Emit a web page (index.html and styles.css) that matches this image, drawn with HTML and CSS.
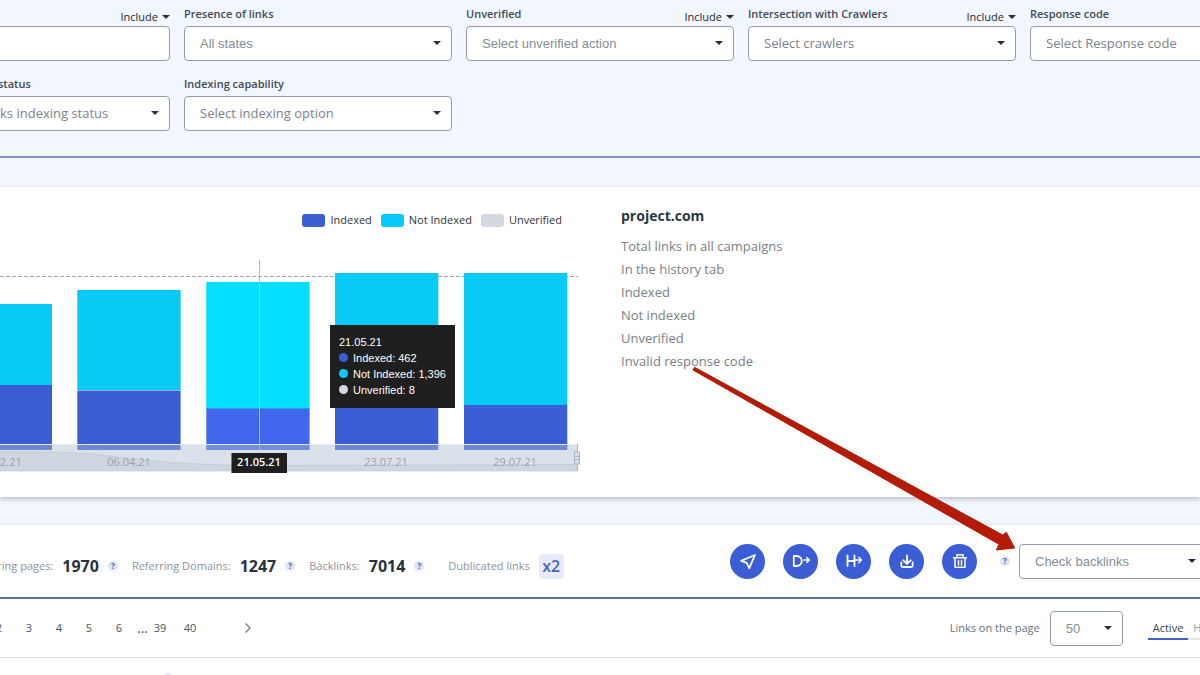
FILE: index.html
```html
<!DOCTYPE html>
<html lang="en">
<head>
<meta charset="utf-8">
<title>Backlinks</title>
<link rel="stylesheet" href="styles.css">
</head>
<body>
<main class="page">
  <form class="filters">
    <div class="field">
      <div class="field-head"><label class="field-label" for="f-search"></label><button type="button" class="include">Include<span class="caret"></span></button></div>
      <input class="control" id="f-search" type="text" aria-label="Search">
    </div>
    <div class="field">
      <div class="field-head"><label class="field-label" for="f-presence">Presence of links</label></div>
      <div class="select"><select class="control arial" id="f-presence"><option>All states</option></select><span class="caret"></span></div>
    </div>
    <div class="field">
      <div class="field-head"><label class="field-label" for="f-unverified">Unverified</label><button type="button" class="include">Include<span class="caret"></span></button></div>
      <div class="select"><select class="control arial" id="f-unverified"><option>Select unverified action</option></select><span class="caret"></span></div>
    </div>
    <div class="field">
      <div class="field-head"><label class="field-label" for="f-crawlers">Intersection with Crawlers</label><button type="button" class="include">Include<span class="caret"></span></button></div>
      <div class="select"><select class="control" id="f-crawlers"><option>Select crawlers</option></select><span class="caret"></span></div>
    </div>
    <div class="field">
      <div class="field-head"><label class="field-label" for="f-code">Response code</label></div>
      <div class="select"><select class="control" id="f-code"><option>Select Response code</option></select><span class="caret"></span></div>
    </div>
    <div class="field">
      <div class="field-head"><label class="field-label" for="f-status">Backlink indexing status</label></div>
      <div class="select"><select class="control" id="f-status"><option>Select backlinks indexing status</option></select><span class="caret"></span></div>
    </div>
    <div class="field">
      <div class="field-head"><label class="field-label" for="f-capability">Indexing capability</label></div>
      <div class="select"><select class="control" id="f-capability"><option>Select indexing option</option></select><span class="caret"></span></div>
    </div>
  </form>

  <section class="card overview">
    <div class="chart">
      <ul class="legend">
        <li><span class="swatch indexed"></span>Indexed</li>
        <li><span class="swatch not-indexed"></span>Not Indexed</li>
        <li><span class="swatch unverified"></span>Unverified</li>
      </ul>
      <svg class="plot" width="600" height="220" viewBox="0 256 600 220">
        <path d="M0 276.500H578" stroke="#a5a5a5" stroke-dasharray="4 2" fill="none"/>
        <g fill="#07caf6">
          <rect x="-51" y="304" width="103" height="81"/>
          <rect x="77.300" y="290" width="103.300" height="100"/>
          <rect x="206.300" y="282" width="103.300" height="127" fill="#05dfff"/>
          <rect x="335" y="273" width="103.300" height="130"/>
          <rect x="464" y="273" width="103.300" height="132"/>
        </g>
        <g fill="#3b5dd6">
          <rect x="-51" y="385" width="103" height="65"/>
          <rect x="77.300" y="390.500" width="103.300" height="59.500"/>
          <rect x="206.300" y="408.500" width="103.300" height="41.500" fill="#4167ec"/>
          <rect x="335" y="403" width="103.300" height="47"/>
          <rect x="464" y="405" width="103.300" height="45"/>
        </g>
        <rect x="0" y="444" width="577" height="27" fill="#afbcd0" fill-opacity=".45"/>
        <path d="M0 451.500C60 452 80 452 110 456S190 465 250 465.500L577 464.500V471H0Z" fill="#bcc9d2" fill-opacity=".4" stroke="#b9c6d4" stroke-width=".6"/>
        <path d="M0 444.500H577" stroke="#e6ebf3"/>
        <path d="M577.500 444V471" stroke="#a7b7cc"/>
        <path d="M259.500 260V450" stroke="#b4bcc6"/>
        <rect x="574.500" y="452" width="5" height="12" fill="#d9e2ec" stroke="#a7b7cc"/>
        <path d="M575 456.500h4M575 459.500h4" stroke="#a7b7cc"/>
        <g class="axis">
          <text x="0" y="466">11.02.21</text>
          <text x="129" y="466">06.04.21</text>
          <text x="386" y="466">23.07.21</text>
          <text x="515" y="466">29.07.21</text>
        </g>
        <rect x="231.500" y="453" width="55.500" height="20" fill="#1f1f1f"/>
        <text class="axis-active" x="259" y="466">21.05.21</text>
      </svg>
      <div class="tooltip">
        <div>21.05.21</div>
        <div><span class="dot indexed"></span>Indexed: 462</div>
        <div><span class="dot not-indexed"></span>Not Indexed: 1,396</div>
        <div><span class="dot unverified"></span>Unverified: 8</div>
      </div>
    </div>
    <div class="summary">
      <h2>project.com</h2>
      <ul>
        <li>Total links in all campaigns</li>
        <li>In the history tab</li>
        <li>Indexed</li>
        <li>Not indexed</li>
        <li>Unverified</li>
        <li>Invalid response code</li>
      </ul>
    </div>
  </section>

  <section class="card results">
    <div class="toolbar">
      <div class="stats">
        <div class="stat"><span class="stat-label">Referring pages:</span><strong>1970</strong><span class="help">?</span></div>
        <div class="stat"><span class="stat-label">Referring Domains:</span><strong>1247</strong><span class="help">?</span></div>
        <div class="stat"><span class="stat-label">Backlinks:</span><strong>7014</strong><span class="help">?</span></div>
        <div class="stat duplicates"><span class="stat-label">Dublicated links</span><button type="button" class="multiplier">x2</button></div>
      </div>
      <div class="actions">
        <button type="button" class="round" aria-label="Send"><svg width="34" height="34" viewBox="0 0 34 34"><path d="M24 11L10.200 16.800L15.700 18.800L18.200 24.200Z"/></svg></button>
        <button type="button" class="round" aria-label="Export domains"><svg width="34" height="34" viewBox="0 0 34 34"><path d="M9.800 12V22H12.500C19.500 22 19.500 12 12.500 12Z"/><path class="thin" d="M20 16h5.200M22.800 13.500L25.300 16L22.800 18.500"/></svg></button>
        <button type="button" class="round" aria-label="Export hosts"><svg width="34" height="34" viewBox="0 0 34 34"><path d="M10.500 11.500V22M17.500 11.500V22M10.500 17H17.500"/><path class="thin" d="M17.500 16h6.700M21.800 13.300L24.500 16L21.800 18.700"/></svg></button>
        <button type="button" class="round" aria-label="Download"><svg width="34" height="34" viewBox="0 0 34 34"><path d="M17 11.500V19.500M13.300 16.300L17 19.800L20.700 16.300M11.300 18.500V21.500Q11.300 23 12.800 23H21.200Q22.700 23 22.700 21.500V18.500"/></svg></button>
        <button type="button" class="round" aria-label="Delete"><svg width="34" height="34" viewBox="0 0 34 34"><path class="thin" d="M10.500 13.700H23.500M14 13.500V10.800H20V13.500M12 14V23.300H22V14M15.500 16.500V21M18.500 16.500V21"/></svg></button>
        <span class="help">?</span>
        <div class="select bulk"><select class="control arial" aria-label="Bulk action"><option>Check backlinks</option></select><span class="caret"></span></div>
      </div>
    </div>
    <div class="pager-bar">
      <nav class="pager" aria-label="Pages">
        <a href="#">2</a><a href="#">3</a><a href="#">4</a><a href="#">5</a><a href="#">6</a><span class="ellipsis">...</span><a href="#">39</a><a href="#">40</a>
        <a href="#" class="next" aria-label="Next page"><svg width="8" height="12" viewBox="0 0 8 12"><path d="M1.500 1.500L6 6L1.500 10.500"/></svg></a>
      </nav>
      <div class="view">
        <label for="per-page">Links on the page</label>
        <div class="select per-page"><select class="control arial" id="per-page"><option>50</option></select><span class="caret"></span></div>
        <div class="tabs"><a href="#" class="tab active">Active</a><a href="#" class="tab">History</a></div>
      </div>
    </div>
    <div class="table-head"><span class="help">?</span></div>
  </section>

  <svg class="pointer" width="324" height="184" viewBox="692 367 324 184" aria-hidden="true"><path d="M694.500 367.300L1002.700 535L1006.300 532.300L1014.700 548L996.300 550L999 544.300L693 370Z" fill="#b31b06" stroke="#b31b06" stroke-linejoin="round"/></svg>
</main>
</body>
</html>
```
FILE: styles.css
```css
* { box-sizing: border-box; }
body {
  margin: 0;
  background: #f2f6fe;
  color: #39424c;
  font: 11px/16px "Open Sans", "Noto Sans", sans-serif;
}
ul { list-style: none; margin: 0; padding: 0; }
a { color: inherit; text-decoration: none; }
button { font: inherit; border: 0; background: none; padding: 0; color: inherit; cursor: pointer; }

.page { position: relative; height: 100vh; overflow: hidden; }

/* Filters */
.filters {
  display: grid;
  grid-template-columns: repeat(5, 1fr);
  gap: 9px 14px;
  margin: 0 -98px;
  padding-bottom: 25px;
  border-bottom: 2px solid #8796c4;
}
.field-head {
  display: flex;
  justify-content: space-between;
  height: 26px;
  padding: 6px 0 1px;
}
.field-label { font-weight: 600; white-space: nowrap; color: #414a55; }
.include { align-self: flex-end; display: flex; align-items: center; gap: 4px; font-weight: 500; color: #222a33; }
.caret {
  border: 4px solid transparent;
  border-top-color: #2c2f33;
  border-bottom: 0;
}
.control {
  display: block;
  width: 100%;
  height: 35px;
  padding: 0 30px 2px 15px;
  border: 1px solid #949cab;
  border-radius: 4px;
  background: #fff;
  color: #7b828a;
  font: 13px "Open Sans", "Noto Sans", sans-serif;
  appearance: none;
}
.control.arial { padding-bottom: 0; font-family: "Liberation Sans", Arial, sans-serif; color: #858e96; }
.select { position: relative; }
.select .caret { position: absolute; right: 11px; top: 15px; pointer-events: none; }

/* Overview */
.card { background: #fff; box-shadow: 0 2px 5px rgba(70, 85, 110, .35); }
.overview { display: flex; margin-top: 29px; height: 310px; }
.chart { position: relative; flex: none; width: 600px; }
.legend {
  display: flex;
  justify-content: flex-end;
  gap: 9px;
  padding: 25px 38px 28px 0;
  color: #333;
}
.legend li { display: flex; align-items: center; gap: 5px; }
.swatch { width: 23px; height: 13px; border-radius: 3px; }
.indexed { background: #3b5dd6; }
.not-indexed { background: #07caf6; }
.unverified { background: #d3d8e3; }
.plot { display: block; }
.axis text { fill: #98a1ad; text-anchor: middle; font-size: 11px; }
.axis-active { fill: #fff; text-anchor: middle; font-size: 11px; font-weight: 600; }
.tooltip {
  position: absolute;
  left: 330px;
  top: 138px;
  padding: 9px 9px 10px;
  background: #1f1f1f;
  color: #fff;
  font: 11px/16px "Liberation Sans", Arial, sans-serif;
  white-space: nowrap;
}
.dot { display: inline-block; width: 9px; height: 9px; margin-right: 5px; border-radius: 50%; }
.summary { padding: 20px 0 0 21px; font-size: 13px; color: #7a8085; }
.summary h2 { margin: 0 0 10px; font-size: 14px; line-height: 18px; color: #2a3840; }
.summary li { line-height: 23px; }

/* Results */
.results { margin-top: 28px; height: 200px; }
.toolbar {
  display: flex;
  justify-content: space-between;
  height: 74px;
  margin-right: -7px;
  border-bottom: 2px solid #5b70a4;
}
.stats { display: flex; align-items: center; gap: 14px; margin-left: -30px; padding-top: 10px; }
.stat { display: flex; align-items: center; gap: 9px; white-space: nowrap; color: #8a949e; }
.stat strong { font-size: 16px; color: #27323b; }
.stat.duplicates { margin-left: 10px; }
.help {
  width: 10px;
  height: 10px;
  border-radius: 50%;
  background: #dde4f7;
  color: #4f63b8;
  font-size: 8px;
  line-height: 10px;
  font-weight: 700;
  text-align: center;
}
.multiplier {
  width: 25px;
  height: 25px;
  border-radius: 3px;
  background: #e7ecfa;
  color: #4560c8;
  font-size: 16px;
  font-weight: 600;
}
.actions { display: flex; align-items: center; gap: 18px; }
.round { width: 35px; height: 35px; border-radius: 50%; background: #3b5dd6; display: grid; place-items: center; }
.round svg { fill: none; stroke: #fff; stroke-width: 1.800; stroke-linejoin: round; stroke-linecap: round; }
.round .thin { stroke-width: 1.500; }
.actions .help { margin: 0 -9px 0 5px; }
.bulk { width: 188px; }
.pager-bar {
  display: flex;
  justify-content: space-between;
  align-items: center;
  height: 59px;
  margin-right: -35px;
  border-bottom: 1px solid #d9dee3;
}
.pager { display: flex; align-items: center; margin-left: -16px; color: #4b555e; }
.pager a { width: 30px; text-align: center; }
.ellipsis { width: 11px; padding-left: 3px; font-size: 14px; }
.pager .next { display: grid; place-items: center; margin-left: 28px; }
.next svg { fill: none; stroke: #7f8b94; stroke-width: 1.500; }
.view { display: flex; align-items: center; gap: 10px; color: #66707a; }
.per-page { width: 73px; }
.tabs { display: flex; margin-left: 15px; color: #99a1a9; }
.tab { padding: 3px 5px 2px; border-bottom: 2px solid #e0e4ec; }
.tab.active { color: #3c454e; border-color: #4560c8; }
.table-head { padding: 15px 0 0 163px; }
.table-head .help { display: block; }

.pointer { position: absolute; left: 692px; top: 367px; pointer-events: none; }
```
